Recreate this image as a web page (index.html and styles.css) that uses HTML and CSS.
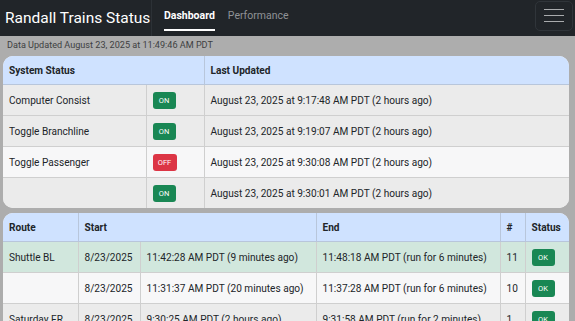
FILE: index.html
```html
<!DOCTYPE html>
<html lang="en">
	<head>
		<meta charset="utf-8">
		<title>Randall Trains Status</title>
		<link rel="stylesheet" href="styles.css">
	</head>

	<body>
		<nav class="navbar">
			<div class="brand">Randall Trains Status</div>
			<div class="nav-links">
				<a class="nav-link active">Dashboard</a>
				<a class="nav-link">Performance</a>
			</div>
			<button class="toggler">
				<span></span>
				<span></span>
				<span></span>
			</button>
		</nav>

		<main class="content">
			<div class="updated">Data Updated August 23, 2025 at 11:49:46 AM PDT</div>

			<div class="card">
				<table class="status">
					<colgroup>
						<col class="c-name">
						<col class="c-badge">
						<col>
					</colgroup>
					<thead>
						<tr>
							<th colspan="2">System Status</th>
							<th>Last Updated</th>
						</tr>
					</thead>
					<tbody>
						<tr class="grey">
							<td>Computer Consist</td>
							<td><span class="badge on">ON</span></td>
							<td>August 23, 2025 at 9:17:48 AM PDT (2 hours ago)</td>
						</tr>
						<tr class="grey">
							<td>Toggle Branchline</td>
							<td><span class="badge on">ON</span></td>
							<td>August 23, 2025 at 9:19:07 AM PDT (2 hours ago)</td>
						</tr>
						<tr class="light">
							<td>Toggle Passenger</td>
							<td><span class="badge off">OFF</span></td>
							<td>August 23, 2025 at 9:30:08 AM PDT (2 hours ago)</td>
						</tr>
						<tr class="grey">
							<td></td>
							<td><span class="badge on">ON</span></td>
							<td>August 23, 2025 at 9:30:01 AM PDT (2 hours ago)</td>
						</tr>
					</tbody>
				</table>
			</div>

			<div class="card">
				<table class="routes">
					<colgroup>
						<col class="c-route">
						<col class="c-date">
						<col class="c-time">
						<col class="c-end">
						<col class="c-num">
						<col>
					</colgroup>
					<thead>
						<tr>
							<th>Route</th>
							<th colspan="2">Start</th>
							<th>End</th>
							<th>#</th>
							<th>Status</th>
						</tr>
					</thead>
					<tbody>
						<tr class="green">
							<td>Shuttle BL</td>
							<td>8/23/2025</td>
							<td>11:42:28 AM PDT (9 minutes ago)</td>
							<td>11:48:18 AM PDT (run for 6 minutes)</td>
							<td>11</td>
							<td><span class="badge on">OK</span></td>
						</tr>
						<tr class="light">
							<td></td>
							<td>8/23/2025</td>
							<td>11:31:37 AM PDT (20 minutes ago)</td>
							<td>11:37:28 AM PDT (run for 6 minutes)</td>
							<td>10</td>
							<td><span class="badge on">OK</span></td>
						</tr>
						<tr class="grey">
							<td>Saturday FR</td>
							<td>8/23/2025</td>
							<td>9:30:25 AM PDT (2 hours ago)</td>
							<td>9:31:58 AM PDT (run for 2 minutes)</td>
							<td>1</td>
							<td><span class="badge on">OK</span></td>
						</tr>
					</tbody>
				</table>
			</div>
		</main>
	</body>
</html>
```

FILE: styles.css
```css
html {
	margin: 0;
	padding: 0;
}

body {
	margin: 0;
	padding: 0;
	background: #adadad;
	font-family: 'Roboto', 'Noto Sans', sans-serif;
	color: #212529;
	overflow: hidden;
	height: 321px;
}

.navbar {
	height: 36px;
	background: #212529;
	display: flex;
	flex-direction: row;
	align-items: center;
}

.brand {
	color: white;
	font-size: 15.5px;
	line-height: 36px;
	padding: 0 0 0 5px;
	width: 146px;
	height: 36px;
	white-space: nowrap;
	flex-shrink: 0;
	border-right: 1px solid #2c3136;
}

.nav-links {
	display: flex;
	flex-direction: row;
	gap: 13px;
	margin-left: 12px;
	height: 36px;
}

.nav-link {
	font-size: 10.5px;
	color: #8f9296;
	line-height: 32px;
	height: 31px;
	box-sizing: border-box;
}

.nav-link.active {
	color: white;
	font-weight: 700;
	border-bottom: 2px solid white;
}

.toggler {
	margin-left: auto;
	margin-right: 2px;
	margin-top: -5px;
	width: 38px;
	height: 30px;
	background: none;
	border: 1px solid #30353a;
	border-radius: 5px;
	display: flex;
	flex-direction: column;
	align-items: center;
	justify-content: center;
	gap: 4.5px;
	padding: 0;
}

.toggler span {
	display: block;
	width: 20px;
	height: 1.6px;
	background: #a9abad;
}

.content {
	padding: 0 6px 0 3px;
}

.updated {
	font-size: 9.1px;
	color: #3d3f42;
	padding: 2px 0 0 4px;
	height: 18px;
	line-height: 14px;
}

.card {
	background: #f8f9fa;
	border-radius: 10px;
	overflow: hidden;
	margin-bottom: 5px;
}

table {
	width: 100%;
	border-collapse: collapse;
	table-layout: fixed;
	font-size: 10.1px;
}

th {
	background: #cfe2ff;
	height: 28px;
	font-weight: 700;
	text-align: left;
	padding: 0 6px;
	border-bottom: 1px solid #b8c6db;
}

td {
	height: 30px;
	padding: 0 6px;
	border-bottom: 1px solid #cfcfcf;
	white-space: nowrap;
}

th + th, td + td {
	border-left: 1px solid #cfcfcf;
}

th + th {
	border-left-color: #b8c6db;
}

tr.grey td { background: #ebebeb; }
tr.light td { background: #f7f7f8; }
tr.green td { background: #d1e7dd; }

.status tbody tr:last-child td { border-bottom: none; }

col.c-name { width: 143px; }
col.c-badge { width: 58px; }

col.c-route { width: 75px; }
col.c-date { width: 62px; }
col.c-time { width: 176px; }
col.c-end { width: 184px; }
col.c-num { width: 25px; }

.badge {
	display: inline-block;
	color: white;
	font-size: 7.5px;
	width: 23px;
	height: 17px;
	line-height: 17px;
	text-align: center;
	border-radius: 3px;
	vertical-align: middle;
}

.badge.on { background: #198754; }
.badge.off { background: #dc3545; width: 24px; }
```
